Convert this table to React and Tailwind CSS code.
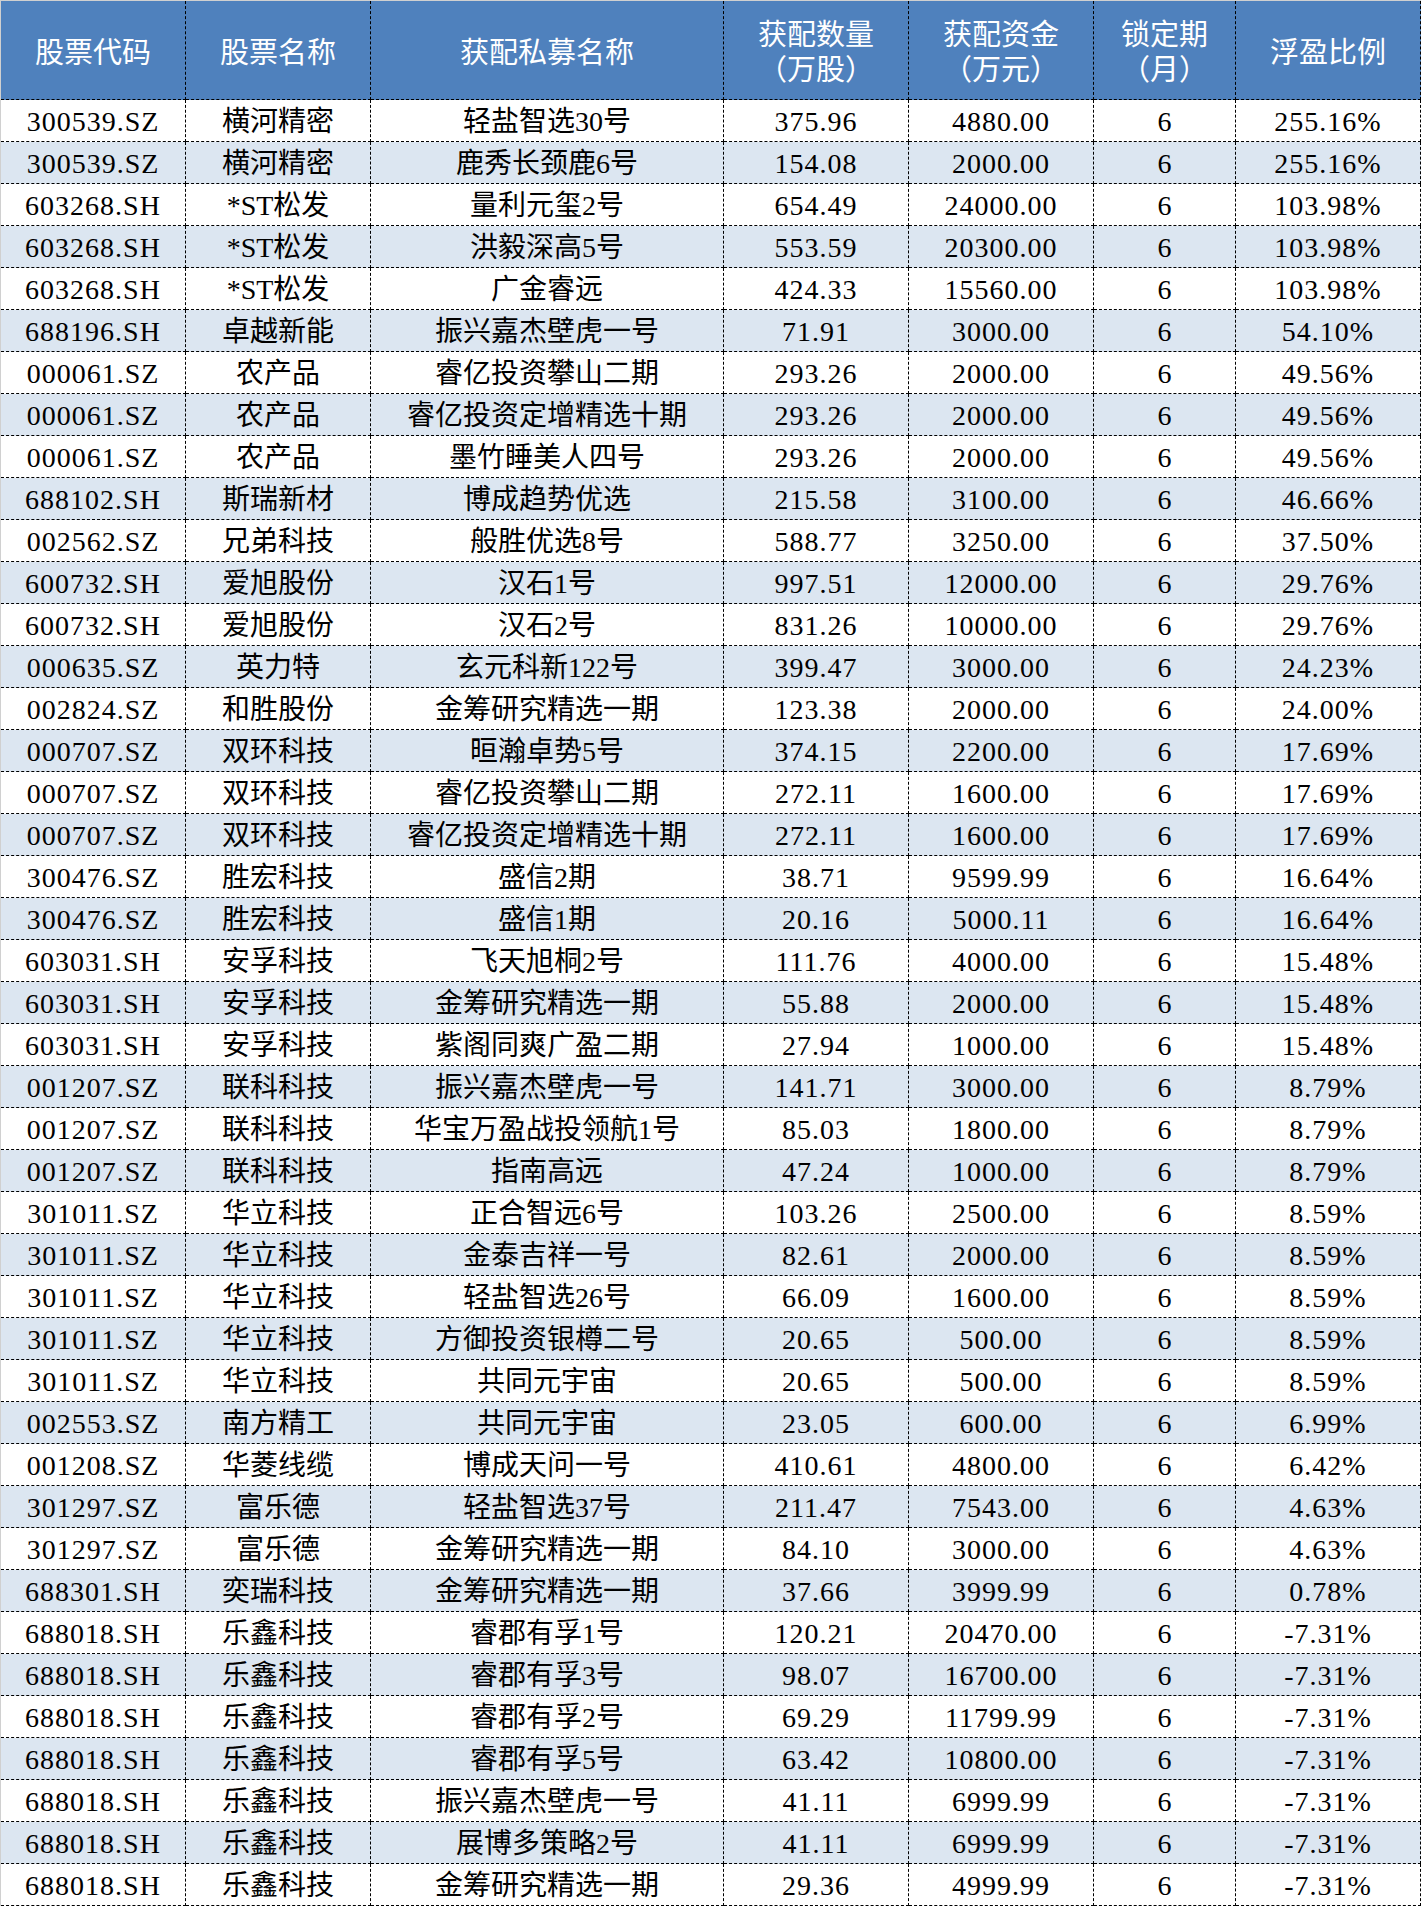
import React from "react";

const rows = [
  ["300539.SZ", "横河精密", "轻盐智选30号", "375.96", "4880.00", "6", "255.16%"],
  ["300539.SZ", "横河精密", "鹿秀长颈鹿6号", "154.08", "2000.00", "6", "255.16%"],
  ["603268.SH", "*ST松发", "量利元玺2号", "654.49", "24000.00", "6", "103.98%"],
  ["603268.SH", "*ST松发", "洪毅深高5号", "553.59", "20300.00", "6", "103.98%"],
  ["603268.SH", "*ST松发", "广金睿远", "424.33", "15560.00", "6", "103.98%"],
  ["688196.SH", "卓越新能", "振兴嘉杰壁虎一号", "71.91", "3000.00", "6", "54.10%"],
  ["000061.SZ", "农产品", "睿亿投资攀山二期", "293.26", "2000.00", "6", "49.56%"],
  ["000061.SZ", "农产品", "睿亿投资定增精选十期", "293.26", "2000.00", "6", "49.56%"],
  ["000061.SZ", "农产品", "墨竹睡美人四号", "293.26", "2000.00", "6", "49.56%"],
  ["688102.SH", "斯瑞新材", "博成趋势优选", "215.58", "3100.00", "6", "46.66%"],
  ["002562.SZ", "兄弟科技", "般胜优选8号", "588.77", "3250.00", "6", "37.50%"],
  ["600732.SH", "爱旭股份", "汉石1号", "997.51", "12000.00", "6", "29.76%"],
  ["600732.SH", "爱旭股份", "汉石2号", "831.26", "10000.00", "6", "29.76%"],
  ["000635.SZ", "英力特", "玄元科新122号", "399.47", "3000.00", "6", "24.23%"],
  ["002824.SZ", "和胜股份", "金筹研究精选一期", "123.38", "2000.00", "6", "24.00%"],
  ["000707.SZ", "双环科技", "晅瀚卓势5号", "374.15", "2200.00", "6", "17.69%"],
  ["000707.SZ", "双环科技", "睿亿投资攀山二期", "272.11", "1600.00", "6", "17.69%"],
  ["000707.SZ", "双环科技", "睿亿投资定增精选十期", "272.11", "1600.00", "6", "17.69%"],
  ["300476.SZ", "胜宏科技", "盛信2期", "38.71", "9599.99", "6", "16.64%"],
  ["300476.SZ", "胜宏科技", "盛信1期", "20.16", "5000.11", "6", "16.64%"],
  ["603031.SH", "安孚科技", "飞天旭桐2号", "111.76", "4000.00", "6", "15.48%"],
  ["603031.SH", "安孚科技", "金筹研究精选一期", "55.88", "2000.00", "6", "15.48%"],
  ["603031.SH", "安孚科技", "紫阁同爽广盈二期", "27.94", "1000.00", "6", "15.48%"],
  ["001207.SZ", "联科科技", "振兴嘉杰壁虎一号", "141.71", "3000.00", "6", "8.79%"],
  ["001207.SZ", "联科科技", "华宝万盈战投领航1号", "85.03", "1800.00", "6", "8.79%"],
  ["001207.SZ", "联科科技", "指南高远", "47.24", "1000.00", "6", "8.79%"],
  ["301011.SZ", "华立科技", "正合智远6号", "103.26", "2500.00", "6", "8.59%"],
  ["301011.SZ", "华立科技", "金泰吉祥一号", "82.61", "2000.00", "6", "8.59%"],
  ["301011.SZ", "华立科技", "轻盐智选26号", "66.09", "1600.00", "6", "8.59%"],
  ["301011.SZ", "华立科技", "方御投资银樽二号", "20.65", "500.00", "6", "8.59%"],
  ["301011.SZ", "华立科技", "共同元宇宙", "20.65", "500.00", "6", "8.59%"],
  ["002553.SZ", "南方精工", "共同元宇宙", "23.05", "600.00", "6", "6.99%"],
  ["001208.SZ", "华菱线缆", "博成天问一号", "410.61", "4800.00", "6", "6.42%"],
  ["301297.SZ", "富乐德", "轻盐智选37号", "211.47", "7543.00", "6", "4.63%"],
  ["301297.SZ", "富乐德", "金筹研究精选一期", "84.10", "3000.00", "6", "4.63%"],
  ["688301.SH", "奕瑞科技", "金筹研究精选一期", "37.66", "3999.99", "6", "0.78%"],
  ["688018.SH", "乐鑫科技", "睿郡有孚1号", "120.21", "20470.00", "6", "-7.31%"],
  ["688018.SH", "乐鑫科技", "睿郡有孚3号", "98.07", "16700.00", "6", "-7.31%"],
  ["688018.SH", "乐鑫科技", "睿郡有孚2号", "69.29", "11799.99", "6", "-7.31%"],
  ["688018.SH", "乐鑫科技", "睿郡有孚5号", "63.42", "10800.00", "6", "-7.31%"],
  ["688018.SH", "乐鑫科技", "振兴嘉杰壁虎一号", "41.11", "6999.99", "6", "-7.31%"],
  ["688018.SH", "乐鑫科技", "展博多策略2号", "41.11", "6999.99", "6", "-7.31%"],
  ["688018.SH", "乐鑫科技", "金筹研究精选一期", "29.36", "4999.99", "6", "-7.31%"],
];

const headers = [
  ["股票代码"],
  ["股票名称"],
  ["获配私募名称"],
  ["获配数量", "（万股）"],
  ["获配资金", "（万元）"],
  ["锁定期", "（月）"],
  ["浮盈比例"],
];

const numericCols = [0, 3, 4, 6];

export default function App() {
  return (
    <div className="w-[1421px] bg-white">
      <div
        className="grid grid-cols-[185px_185px_353px_185px_185px_142px_185px] border-l border-t border-[#d0d0d0]"
        style={{ fontFamily: '"Liberation Serif", "Noto Sans CJK SC", serif' }}
      >
        {headers.map((h, i) => (
          <div
            key={"h" + i}
            className="h-[99px] bg-[#4f81bd] border-r border-b border-dashed border-black flex items-center justify-center text-white text-[29px] leading-[35px] text-center"
            style={{ fontFamily: '"Noto Sans CJK SC", sans-serif' }}
          >
            <div>
              {h.length === 2 ? (
                <>
                  {h[0]}
                  <br />
                  {h[1]}
                </>
              ) : (
                h[0]
              )}
            </div>
          </div>
        ))}
        {rows.map((r, ri) =>
          r.map((c, ci) => (
            <div
              key={ri + "-" + ci}
              className={
                "h-[42px] border-r border-b border-dashed border-black flex items-center justify-center pt-[3px] text-[28px] leading-none text-black whitespace-nowrap " +
                (numericCols.includes(ci) ? "tracking-[1px] " : "") +
                (ri % 2 === 1 ? "bg-[#dce6f1]" : "bg-white")
              }
            >
              {c}
            </div>
          ))
        )}
      </div>
    </div>
  );
}
